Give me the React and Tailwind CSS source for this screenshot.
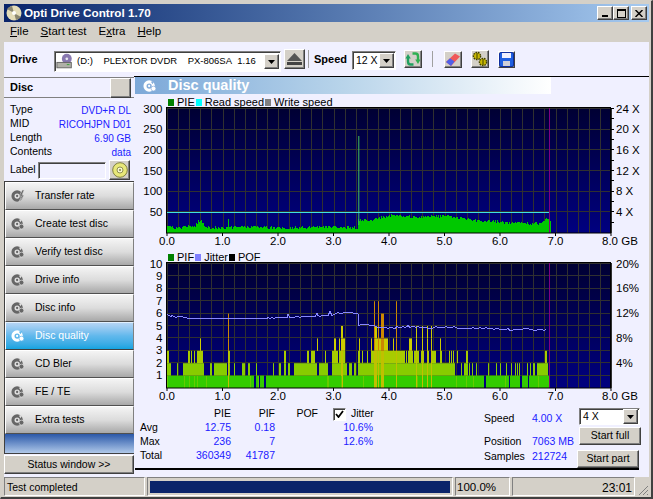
import { Fragment } from 'react'

const bevel = 'border border-t-white border-l-white border-r-[#404040] border-b-[#404040] shadow-[inset_-1px_-1px_0_#808080]'
const sunken = 'border border-t-[#808080] border-l-[#808080] border-r-white border-b-white shadow-[inset_1px_1px_0_#404040]'
const flat = 'border border-t-[#808080] border-l-[#808080] border-r-white border-b-white'

// seeded noise so the picture is the same every run
function rng(seed) {
  let s = seed
  return () => {
    s = (s * 16807) % 2147483647
    return s / 2147483647
  }
}

const X0 = 32
const GB = 55.5
const END = 384

// zoom-crop x values -> px inside the plot svg
const zl = (z) => z / 3
const zr = (z) => z / 3 + 260

// x in px from plot start, height in px
const pieKeys = [[0, 8], [3, 8], [6, 5], [14, 5], [18, 7], [28, 7], [31, 12], [34, 12], [38, 7], [45, 5], [70, 6], [90, 6], [120, 5], [150, 6], [175, 6], [190, 5], [191, 13], [205, 13], [215, 16], [225, 18], [240, 16], [277, 17], [305, 13], [333, 11], [372, 9], [380, 14], [384, 13]]

function pieHeight(x) {
  for (let i = 1; i < pieKeys.length; i++) {
    const [a, av] = pieKeys[i - 1]
    const [b, bv] = pieKeys[i]
    if (x >= a && x <= b) return av + ((bv - av) * (x - a)) / (b - a || 1)
  }
  return 0
}

function PieBars() {
  const r = rng(77)
  const bars = []
  for (let x = 0; x < END; x++) {
    const h = Math.round(pieHeight(x) + (r() - 0.5) * 3)
    bars.push(<rect key={x} x={X0 + x} y={126 - h} width={1} height={h} fill="#00c800" />)
  }
  return bars
}

const lv1 = [[95, 358], [362, 372], [375, 388], [392, 780]]
const lv2 = [[95, 107], [125, 130], [144, 207], [226, 232], [238, 276], [280, 285], [296, 300], [322, 330], [338, 344], [363, 366], [414, 418], [432, 437], [447, 452], [460, 466], [477, 545], [552, 580], [590, 635], [643, 650], [656, 664], [670, 780]]
const lv3 = [[95, 102], [160, 165], [168, 170], [178, 180], [186, 204], [280, 285], [447, 452], [516, 522], [527, 540], [571, 573], [591, 608], [612, 630], [670, 675], [681, 684], [695, 700], [708, 780]]
const lvHi = [[195, 197, 4], [280, 281, 6], [545, 548, 4], [597, 603, 4], [612, 615, 4], [618, 624, 5], [624, 630, 4], [672, 674, 4], [708, 712, 4], [717, 720, 7], [720, 725, 5], [725, 738, 4], [730, 732, 7], [738, 747, 6], [747, 760, 4], [775, 778, 4]]
const rv1 = [[0, 268], [272, 341], [345, 375], [380, 398], [403, 465]]
const rv2 = [[0, 180], [198, 202], [207, 218], [222, 226], [232, 235], [243, 246], [278, 282], [302, 305], [316, 319], [333, 337], [347, 350], [360, 363], [367, 370], [373, 376], [396, 400], [405, 408], [415, 420], [425, 458]]
const rv3 = [[0, 30], [33, 37], [40, 55], [57, 72], [77, 88], [98, 102], [108, 122], [136, 142], [162, 165], [168, 170], [174, 177], [186, 190], [213, 218], [450, 456]]
const rvHi = [[3, 5, 7], [42, 52, 4], [62, 64, 5], [82, 84, 5], [96, 98, 5], [108, 110, 5], [136, 138, 4]]

const levelFill = ['#33cc00', '#88cc00', '#a8cc00', '#cccc00', '#cccc00', '#cc8800', '#cc8800']

function PifBars() {
  const out = []
  const U = 12.4
  const band = (ranges, conv, lvl, fill, key) =>
    ranges.forEach(([a, b]) => {
      const xa = Math.round(conv(a))
      const xb = Math.round(conv(b))
      out.push(<rect key={`${key}-${a}`} x={xa} y={126 - U * lvl} width={Math.max(1, xb - xa)} height={U} fill={fill} />)
    })
  band(lv1, zl, 1, levelFill[0], 'a1')
  band(lv2, zl, 2, levelFill[1], 'a2')
  band(lv3, zl, 3, levelFill[2], 'a3')
  band(rv1, zr, 1, levelFill[0], 'b1')
  band(rv2, zr, 2, levelFill[1], 'b2')
  band(rv3, zr, 3, levelFill[2], 'b3')
  const hi = (ranges, conv, key) =>
    ranges.forEach(([a, b, top]) => {
      const xa = Math.round(conv(a))
      const w = Math.max(1, Math.round(conv(b)) - xa)
      for (let l = 3; l < top; l++) {
        out.push(<rect key={`${key}-${a}-${l}`} x={xa} y={126 - U * (l + 1)} width={w} height={U} fill={levelFill[top >= 6 ? 5 : l]} />)
      }
      // tall ones stay yellow all the way down
      if (top >= 5) out.push(<rect key={`${key}-${a}-o`} x={xa} y={126 - U * 3} width={w} height={U * 3} fill="#c0c000" />)
    })
  hi(lvHi, zl, 'ah')
  hi(rvHi, zr, 'bh')
  // lighter stripes through the bottom band
  const r = rng(31)
  for (let i = 0; i < 18; i++) {
    const x = Math.round(X0 + r() * 380)
    out.push(<rect key={`s${i}`} x={x} y={114} width={1} height={12} fill="#66cc00" />)
  }
  return out
}

function jitterPoints() {
  const keys = [[95, 195], [110, 197], [170, 205], [300, 203], [400, 203], [455, 202], [460, 193], [465, 200], [540, 198], [545, 188], [550, 197], [580, 195], [586, 183], [592, 194], [610, 188], [650, 186], [668, 190], [672, 224], [700, 222], [740, 232], [780, 232]]
  const keysR = [[0, 232], [40, 228], [100, 232], [160, 230], [210, 235], [250, 232], [320, 237], [400, 237], [455, 238]]
  const pts = keys.map(([x, y]) => [zl(x), y / 3 + 250 - 262]).concat(keysR.map(([x, y]) => [zr(x), y / 3 + 250 - 262]))
  const r = rng(9)
  const out = []
  for (let i = 1; i < pts.length; i++) {
    const [a, ay] = pts[i - 1]
    const [b, by] = pts[i]
    for (let x = a; x < b; x += 2) {
      const amt = x < 60 || x > 240 ? 1.6 : 0.6
      const big = b - a < 3
      const y = ay + ((by - ay) * (x - a)) / (b - a) + (big ? 0 : (r() - 0.5) * amt)
      out.push(`${Math.round(x)},${Math.round(y) + 0.5}`)
    }
  }
  return out.join(' ')
}

function Chart({ id, left, right, rightTicks, children }) {
  const top = 1
  const bottom = 126
  const plotW = 444
  const xTicks = Array.from({ length: 41 }, (_, i) => i)
  return (
    <svg width="518" height="147" className="block -mt-[6px] shrink-0" style={{ fontFamily: '"Liberation Sans", sans-serif' }}>
      <defs>
        <linearGradient id={id} x1="0" y1="0" x2="0" y2="1">
          <stop offset="0" stopColor="#000033" />
          <stop offset="1" stopColor="#000080" />
        </linearGradient>
      </defs>
      <g transform="translate(0,6)">
        <rect x={X0} y={top} width={plotW} height={bottom - top} fill={`url(#${id})`} />
        {xTicks.map((i) => {
          const x = Math.round(X0 + i * 11.1) + 0.5
          return <line key={i} x1={x} x2={x} y1={top} y2={bottom} stroke="#303030" />
        })}
        {left.map((l) => (
          <line key={l.v} x1={X0} x2={X0 + plotW} y1={Math.round(l.y) + 0.5} y2={Math.round(l.y) + 0.5} stroke="#303030" />
        ))}
        {children}
        <line x1={414.5} x2={414.5} y1={top} y2={bottom} stroke="#800080" />
        <rect x={X0 - 0.5} y={top - 0.5} width={plotW} height={bottom - top + 0.5} fill="none" stroke="#000" />
        {left.map((l) => (
          <text key={l.v} x={27.5} y={l.y + 4.5} textAnchor="end" fontSize="11.5" fill="#000">{l.v}</text>
        ))}
        {right.map((l) => (
          <text key={l.v} x={481} y={l.y + 4.5} fontSize="11.5" fill="#000">{l.v}</text>
        ))}
        {rightTicks.map((y) => (
          <line key={y} x1={X0 + plotW} x2={X0 + plotW + 3} y1={Math.round(y) + 0.5} y2={Math.round(y) + 0.5} stroke="#000" />
        ))}
        {[0, 1, 2, 3, 4, 5, 6, 7, 8].map((g) => (
          <Fragment key={g}>
            <line x1={X0 + g * GB} x2={X0 + g * GB} y1={bottom} y2={bottom + 3} stroke="#000" />
            <text x={X0 + g * GB} y={bottom + 12} textAnchor={g === 8 ? 'start' : 'middle'} dx={g === 8 ? -9 : 0} fontSize="11.5" fill="#000">
              {g === 8 ? '8.0 GB' : `${g}.0`}
            </text>
          </Fragment>
        ))}
      </g>
    </svg>
  )
}

function Swatch({ color, label }) {
  return (
    <span className="flex items-center gap-[3px] mr-[1px]">
      <span className={`block w-[6px] h-[7px] ${color}`}></span>
      <span>{label}</span>
    </span>
  )
}

function DiscIcon({ color = '#666666', hole = '#e8e8e8', size = 14, kind = 'dot' }) {
  return (
    <svg width={size} height={size} viewBox="0 0 16 16" className="shrink-0">
      <circle cx="7" cy="8" r="6.5" fill={color} />
      <circle cx="7" cy="8" r="3" fill={hole} />
      <circle cx="7" cy="8" r="1.3" fill={color} />
      {kind === 'bolt' ? (
        <path d="M13 1 L9.5 8 H12 L9 15 L15 7 H12.5 L15 1 Z" fill={color} stroke={hole} strokeWidth="0.6" />
      ) : (
        <>
          <path d="M9 3 L13 2 L11 6 Z" fill={hole} />
          <circle cx="12" cy="11" r="2.8" fill={color} stroke={hole} strokeWidth="0.8" />
        </>
      )}
    </svg>
  )
}

function SideButton({ label, active, kind }) {
  return (
    <div className={`h-[28px] flex items-center pl-[5px] gap-[10px] border ${active ? 'border-t-[#e0f0ff] border-b-[#404040] border-l-white border-r-[#808080] bg-gradient-to-b from-[#b4d4f4] via-[#60b8ec] to-[#10a4e0] text-white' : 'border-t-white border-b-[#505050] border-l-white border-r-[#808080] bg-gradient-to-b from-[#f4f4f4] via-[#dcdcdc] to-[#a8a8a8] text-black'}`}>
      <DiscIcon color={active ? '#ffffff' : '#666666'} hole={active ? '#60b8ec' : '#e0e0e0'} kind={kind} />
      <span className="text-[10.5px]">{label}</span>
    </div>
  )
}

function DiscRow({ label, value }) {
  return (
    <div className="flex justify-between h-[14px] items-center">
      <span className="text-[10.5px]">{label}</span>
      <span className="text-[#2020ff] text-[10px]">{value}</span>
    </div>
  )
}

function ToolButton({ children, className = 'w-[21px] h-[19px]' }) {
  return <div className={`${bevel} ${className} bg-[#d4d0c8] flex items-center justify-center shrink-0`}>{children}</div>
}

function Combo({ children, className }) {
  return (
    <div className={`${sunken} ${className} bg-white flex items-center`}>
      <div className="flex-1 min-w-0 flex items-center">{children}</div>
      <div className={`${bevel} w-[15px] h-[15px] mr-[1px] bg-[#d4d0c8] flex items-center justify-center`}>
        <svg width="7" height="4" viewBox="0 0 7 4"><path d="M0 0H7L3.5 4Z" fill="#000" /></svg>
      </div>
    </div>
  )
}

const pieLeft = [50, 100, 150, 200, 250, 300].map((v) => ({ v, y: 125 - (v * 124) / 300 }))
const pieRight = [4, 8, 12, 16, 20, 24].map((v) => ({ v: `${v} X`, y: 125 - (v * 124) / 24 }))
const pieTicks = Array.from({ length: 12 }, (_, i) => 125 - ((i + 1) * 124) / 12)
const pifLeft = [1, 2, 3, 4, 5, 6, 7, 8, 9, 10].map((v) => ({ v, y: 125 - v * 12.4 }))
const pifRight = [4, 8, 12, 16, 20].map((v) => ({ v: `${v}%`, y: 125 - (v * 124) / 20 }))

const blue = 'text-right text-[#2020ff] text-[10.5px]'

export default function App() {
  const spike = X0 + (358.3 - 167)
  return (
    <div className="w-[653px] h-[499px] overflow-hidden bg-[#d4d0c8] border-t border-l border-t-[#d4d0c8] border-l-[#d4d0c8] border-r-2 border-b-2 border-r-[#404040] border-b-[#404040] text-[11px] text-black" style={{ fontFamily: '"Liberation Sans", sans-serif' }}>
      <div className="pl-[3px] pr-[2px] pt-[3px] flex flex-col h-full">
        {/* title bar */}
        <div className="h-[18px] flex items-center bg-gradient-to-r from-[#0a246a] to-[#a6caf0] pl-[2px] pr-[2px] shrink-0">
          <svg width="16" height="16" viewBox="0 0 16 16" className="shrink-0">
            <circle cx="8" cy="8" r="7.5" fill="#e4dcb8" />
            <path d="M8 8 L1 4 A8 8 0 0 1 6 1 Z" fill="#8a8670" />
            <path d="M8 8 L15 12 A8 8 0 0 1 10 15 Z" fill="#8a8670" />
            <circle cx="8" cy="8" r="2" fill="#fff" />
          </svg>
          <span className="ml-[2px] text-white font-bold text-[11.7px] flex-1">Opti Drive Control 1.70</span>
          <div className={`${bevel} w-[16px] h-[14px] bg-[#d4d0c8] flex items-end justify-center pb-[2px]`}><span className="block w-[6px] h-[2px] bg-black"></span></div>
          <div className={`${bevel} w-[16px] h-[14px] bg-[#d4d0c8] flex items-center justify-center`}><span className="block w-[9px] h-[9px] border border-black border-t-2"></span></div>
          <div className={`${bevel} ml-[2px] w-[16px] h-[14px] bg-[#d4d0c8] flex items-center justify-center`}>
            <svg width="8" height="7" viewBox="0 0 8 7"><path d="M0.5 0L7.5 7M7.5 0L0.5 7" stroke="#000" strokeWidth="1.5" /></svg>
          </div>
        </div>

        {/* menu */}
        <div className="h-[20px] flex items-center gap-[12px] pl-[6px] text-[11.5px] shrink-0">
          <span><u>F</u>ile</span>
          <span><u>S</u>tart test</span>
          <span>E<u>x</u>tra</span>
          <span><u>H</u>elp</span>
        </div>

        {/* client area */}
        <div className="flex-1 min-h-0 flex flex-col bg-[#f0f0ff]">
          {/* toolbar */}
          <div className="h-[34px] flex items-center pl-[6px] shrink-0">
            <span className="font-bold w-[44px]">Drive</span>
            <Combo className="w-[227px] h-[21px] mt-[5px]">
              <svg width="18" height="17" viewBox="0 0 20 18" className="ml-[1px] shrink-0">
                <circle cx="12" cy="6" r="5.5" fill="#8878b0" />
                <circle cx="12" cy="6" r="1.5" fill="#e8e8f0" />
                <rect x="1" y="10" width="16" height="6" fill="#b0b0a8" stroke="#606060" />
                <rect x="12" y="12" width="3" height="1" fill="#30a030" />
              </svg>
              <span className="ml-[3px] whitespace-nowrap text-[9.5px]">(D:)&nbsp;&nbsp;&nbsp; PLEXTOR DVDR&nbsp;&nbsp;&nbsp; PX-806SA&nbsp; 1.16</span>
            </Combo>
            <ToolButton className="ml-[3px] w-[21px] h-[20px]">
              <svg width="15" height="13" viewBox="0 0 15 13"><path d="M7.5 0L15 8H0Z" fill="#555" /><rect y="9" width="15" height="3" fill="#444" /></svg>
            </ToolButton>
            <span className="ml-[3px] w-px h-[18px] bg-[#a0a0a0]"></span>
            <span className="font-bold ml-[5px] w-[38px]">Speed</span>
            <Combo className="w-[44px] h-[19px] mt-[3px]"><span className="ml-[3px] text-[10.5px]">12 X</span></Combo>
            <ToolButton className="ml-[8px]">
              <svg width="16" height="16" viewBox="0 0 16 16">
                <path d="M8.5 13.5H5.5C3.5 13.5 3 12 3 10.5V7" fill="none" stroke="#20a060" strokeWidth="2.4" />
                <path d="M0.5 7.5L3 3 5.8 7.5Z" fill="#20a060" />
                <path d="M7.5 2.5H10.5C12.5 2.5 13 4 13 5.5V9" fill="none" stroke="#30b050" strokeWidth="2.4" />
                <path d="M10.2 8.5L13 13 15.5 8.5Z" fill="#30b050" />
              </svg>
            </ToolButton>
            <span className="ml-[10px] w-px h-[16px] bg-[#a0a0a0]"></span>
            <ToolButton className="ml-[11px]">
              <svg width="16" height="15" viewBox="0 0 16 15">
                <path d="M1 10L10 1.5 15 4.5 6 14Z" fill="#f05858" />
                <path d="M1 10L5 6.2 9.5 9.5 6 14Z" fill="#5060e8" />
              </svg>
            </ToolButton>
            <ToolButton className="ml-[9px]">
              <svg width="16" height="16" viewBox="0 0 16 16">
                <circle cx="5" cy="5" r="3.6" fill="#c8b800" stroke="#404000" strokeDasharray="1.6 0.9" strokeWidth="1.4" />
                <circle cx="11" cy="11" r="3.6" fill="#c8b800" stroke="#404000" strokeDasharray="1.6 0.9" strokeWidth="1.4" />
                <path d="M5 2V8M11 8V14" stroke="#404000" />
              </svg>
            </ToolButton>
            <ToolButton className="ml-[9px]">
              <svg width="15" height="15" viewBox="0 0 15 15">
                <rect x="0.5" y="0.5" width="14" height="14" rx="1.5" fill="#2060e0" stroke="#1030a0" />
                <rect x="3" y="1" width="9" height="5" fill="#f0f0ff" />
                <rect x="4" y="9" width="7" height="5" fill="#d0d0d8" />
              </svg>
            </ToolButton>
          </div>

          <div className="flex flex-1 min-h-0">
            {/* sidebar */}
            <div className="w-[130px] shrink-0 flex flex-col">
              <div className="h-[21px] flex items-center justify-between border-t border-b border-t-[#808080] border-b-[#808080] mt-[1px]">
                <span className="font-bold pl-[6px]">Disc</span>
                <div className={`${bevel} w-[21px] h-[20px] bg-[#d4d0c8] mr-[3px]`}></div>
              </div>
              <div className="pl-[6px] pr-[3px] pt-[5px] h-[84px] shrink-0">
                <DiscRow label="Type" value="DVD+R DL" />
                <DiscRow label="MID" value="RICOHJPN D01" />
                <DiscRow label="Length" value="6.90 GB" />
                <DiscRow label="Contents" value="data" />
                <div className="flex items-center h-[22px]">
                  <span className="w-[28px] shrink-0 text-[10.5px]">Label</span>
                  <div className={`${sunken} w-[68px] h-[17px] bg-[#f0f0ff]`}></div>
                  <div className={`${bevel} ml-[3px] w-[21px] h-[20px] bg-[#d4d0c8] flex items-center justify-center`}>
                    <svg width="16" height="16" viewBox="0 0 16 16">
                      <circle cx="8" cy="8" r="7.3" fill="#e8e878" stroke="#808040" />
                      <circle cx="8" cy="8" r="3" fill="#f8f8d0" stroke="#909050" />
                      <circle cx="8" cy="8" r="1" fill="#808040" />
                    </svg>
                  </div>
                </div>
              </div>
              <div className="border-l border-t border-l-[#404040] border-t-[#404040] flex flex-col -mt-[1px]">
                <SideButton label="Transfer rate" kind="bolt" />
                <SideButton label="Create test disc" />
                <SideButton label="Verify test disc" />
                <SideButton label="Drive info" />
                <SideButton label="Disc info" />
                <SideButton label="Disc quality" active />
                <SideButton label="CD Bler" />
                <SideButton label="FE / TE" />
                <SideButton label="Extra tests" />
                <div className="h-[20px] bg-gradient-to-b from-[#2c58a8] to-[#b0c8e8] border-b border-b-[#404040]"></div>
              </div>
              <div className={`${bevel} h-[19px] mt-[1px] bg-[#d4d0c8] flex items-center justify-center text-[10.5px]`}>Status window &gt;&gt;</div>
            </div>

            {/* main */}
            <div className="flex-1 min-w-0 border-t border-t-black pl-[1px] flex flex-col">
              <div className="w-[416px] h-[17px] shrink-0 flex items-center pl-[8px] bg-gradient-to-r from-[#7ca8d8] via-[#b8d4ea] to-white">
                <DiscIcon color="#ffffff" hole="#86aedb" size={14} />
                <span className="ml-[11px] text-white font-bold text-[14.5px]">Disc quality</span>
              </div>
              <div className="h-[13px] pt-[3px] shrink-0 flex items-center pl-[33px] text-[11px]">
                <Swatch color="bg-[#008000]" label="PIE" />
                <Swatch color="bg-[#00ffff]" label="Read speed" />
                <Swatch color="bg-[#808080]" label="Write speed" />
              </div>
              <Chart id="g1" left={pieLeft} right={pieRight} rightTicks={pieTicks}>
                <PieBars />
                <line x1={spike + 0.5} x2={spike + 0.5} y1={29} y2={118} stroke="#40c060" />
                <line x1={93.5} x2={93.5} y1={112} y2={120} stroke="#00c800" />
                <line x1={X0} x2={414} y1={105.5} y2={105.5} stroke="#40e0e0" />
              </Chart>
              <div className="h-[13px] pt-[3px] shrink-0 flex items-center pl-[33px] text-[11px] mt-[1px]">
                <Swatch color="bg-[#008000]" label="PIF" />
                <Swatch color="bg-[#8080ff]" label="Jitter" />
                <Swatch color="bg-black" label="POF" />
              </div>
              <Chart id="g2" left={pifLeft} right={pifRight} rightTicks={[]}>
                <PifBars />
                <polyline points={jitterPoints()} fill="none" stroke="#8888ff" strokeWidth="1" shapeRendering="crispEdges" />
              </Chart>

              {/* stats */}
              <div className="h-[67px] shrink-0 flex mr-[10px] border-b-2 border-b-black text-[10.5px]">
                <div className="w-[241px] pl-[5px] pt-[4px] grid grid-cols-[48px_43px_44px_43px_1fr] auto-rows-[14px] items-center shrink-0">
                  <span></span>
                  <span className="text-right">PIE</span>
                  <span className="text-right">PIF</span>
                  <span className="text-right">POF</span>
                  <span className="flex items-center pl-[15px] gap-[5px] whitespace-nowrap">
                    <span className={`${sunken} w-[13px] h-[13px] bg-white flex items-center justify-center shrink-0`}>
                      <svg width="9" height="8" viewBox="0 0 9 8"><path d="M1 4L3.5 7 8 1" fill="none" stroke="#000" strokeWidth="1.8" /></svg>
                    </span>
                    Jitter
                  </span>
                  <span>Avg</span>
                  <span className={blue}>12.75</span>
                  <span className={blue}>0.18</span>
                  <span></span>
                  <span className={`${blue} pr-[3px]`}>10.6%</span>
                  <span>Max</span>
                  <span className={blue}>236</span>
                  <span className={blue}>7</span>
                  <span></span>
                  <span className={`${blue} pr-[3px]`}>12.6%</span>
                  <span>Total</span>
                  <span className={blue}>360349</span>
                  <span className={blue}>41787</span>
                </div>
                <div className="w-[96px] ml-[108px] pt-[9px] shrink-0">
                  <div className="flex h-[14px] items-center"><span className="w-[48px]">Speed</span><span className="text-[#2020ff]">4.00 X</span></div>
                  <div className="flex h-[14px] items-center mt-[9px]"><span className="w-[48px]">Position</span><span className="text-[#2020ff] whitespace-nowrap">7063 MB</span></div>
                  <div className="flex h-[14px] items-center mt-[1px]"><span className="w-[48px]">Samples</span><span className="text-[#2020ff]">212724</span></div>
                </div>
                <div className="pt-[5px] shrink-0 ml-[-1px] flex flex-col items-start">
                  <Combo className="w-[61px] h-[17px]"><span className="ml-[3px]">4 X</span></Combo>
                  <div className={`${bevel} w-[62px] h-[18px] mt-[2px] bg-[#d4d0c8] flex items-center justify-center`}>Start full</div>
                  <div className={`${bevel} w-[62px] h-[18px] mt-[5px] -ml-[2px] bg-[#d4d0c8] flex items-center justify-center`}>Start part</div>
                </div>
              </div>
            </div>
          </div>
        </div>

        {/* status bar */}
        <div className="h-[20px] flex items-start gap-[2px] shrink-0 text-[10.5px]">
          <div className={`${flat} w-[141px] h-[19px] flex items-center pl-[2px] pt-[2px]`}>Test completed</div>
          <div className={`${flat} w-[306px] h-[19px] flex items-center px-[2px] pt-[3px] pb-[2px]`}>
            <div className="w-full h-full bg-[#0a246a]"></div>
          </div>
          <div className={`${flat} w-[55px] h-[19px] flex items-center pl-[1px] pt-[2px] text-[11.5px]`}>100.0%</div>
          <div className={`${flat} flex-1 h-[19px] flex items-center justify-end pr-[2px] pt-[2px] text-[12px]`}>23:01</div>
          <svg width="12" height="12" viewBox="0 0 12 12" className="shrink-0 self-end mb-[1px]">
            <path d="M11 2L2 11M11 6L6 11M11 10L10 11" stroke="#808080" />
          </svg>
        </div>
      </div>
    </div>
  )
}
